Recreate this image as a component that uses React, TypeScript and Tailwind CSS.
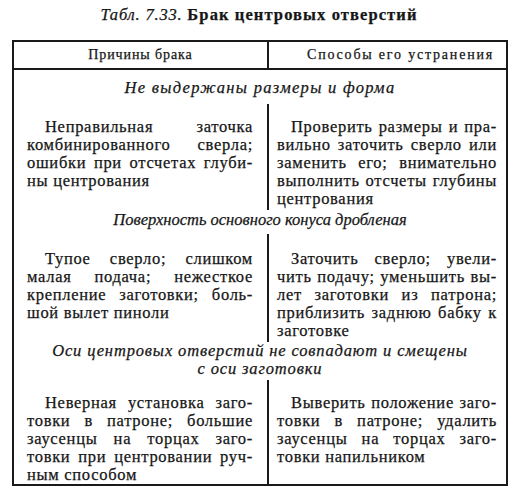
const serif = "[font-family:'Liberation_Serif','Times_New_Roman',serif]";

type Line = { t: string; j?: boolean };

function Para({ lines, indent }: { lines: Line[]; indent: string }) {
  return (
    <div>
      {lines.map((l, i) => (
        <div
          key={i}
          className={`${l.j ? "text-justify [text-align-last:justify]" : "whitespace-nowrap"} ${i === 0 ? indent : ""}`}
        >
          {l.t}
        </div>
      ))}
    </div>
  );
}

const sections: {
  title: string[];
  left: Line[];
  right: Line[];
}[] = [
  {
    title: ["Не выдержаны размеры и форма"],
    left: [
      { t: "Неправильная заточка", j: true },
      { t: "комбинированного сверла;", j: true },
      { t: "ошибки при отсчетах глуби-", j: true },
      { t: "ны центрования" },
    ],
    right: [
      { t: "Проверить размеры и пра-", j: true },
      { t: "вильно заточить сверло или", j: true },
      { t: "заменить его; внимательно", j: true },
      { t: "выполнить отсчеты глубины", j: true },
      { t: "центрования" },
    ],
  },
  {
    title: ["Поверхность основного конуса дробленая"],
    left: [
      { t: "Тупое сверло; слишком", j: true },
      { t: "малая подача; нежесткое", j: true },
      { t: "крепление заготовки; боль-", j: true },
      { t: "шой вылет пиноли" },
    ],
    right: [
      { t: "Заточить сверло; увели-", j: true },
      { t: "чить подачу; уменьшить вы-", j: true },
      { t: "лет заготовки из патрона;", j: true },
      { t: "приблизить заднюю бабку к", j: true },
      { t: "заготовке" },
    ],
  },
  {
    title: ["Оси центровых отверстий не совпадают и смещены", "с оси заготовки"],
    left: [
      { t: "Неверная установка заго-", j: true },
      { t: "товки в патроне; большие", j: true },
      { t: "заусенцы на торцах заго-", j: true },
      { t: "товки при центровании руч-", j: true },
      { t: "ным способом" },
    ],
    right: [
      { t: "Выверить положение заго-", j: true },
      { t: "товки в патроне; удалить", j: true },
      { t: "заусенцы на торцах заго-", j: true },
      { t: "товки напильником" },
    ],
  },
];

const headPad = [
  "pt-[9px] pb-[7px] tracking-[1.3px]",
  "pt-[1px] pb-[5px] tracking-[0px]",
  "pt-[0px] pb-[2px] tracking-[0.85px]",
];
const bodyPad = ["pt-[14px] pb-[2px]", "pt-[16px] pb-[2px]", "pt-[14px] pb-[0px]"];

export default function App() {
  return (
    <div className={`w-[518px] h-[491px] bg-white text-[#161616] ${serif} overflow-hidden [-webkit-text-stroke:0.25px_#161616]`}>
      {/* Title */}
      <div className="h-[40px] pt-[5px] text-center text-[16.5px] leading-[20px]">
        <span className="italic tracking-[0.8px]">Табл. 7.33. </span>
        <span className="font-bold tracking-[1.1px]">Брак центровых отверстий</span>
      </div>

      {/* Table */}
      <div className="ml-[12px] w-[496px] border-2 border-[#1a1a1a]">
        {/* Header */}
        <div className="grid grid-cols-[255px_1fr] border-b-2 border-[#1a1a1a] text-[14px] leading-[26px]">
          <div className="border-r-2 border-[#1a1a1a] text-center tracking-[0.9px]">Причины брака</div>
          <div className="pl-[26px] text-center tracking-[1.8px]">Способы его устранения</div>
        </div>

        {sections.map((s, si) => (
          <div key={si}>
            <div className={`text-center italic text-[16.5px] leading-[18px] ${headPad[si]}`}>
              {s.title.map((t, i) => (
                <div key={i}>{t}</div>
              ))}
            </div>
            <div className="grid grid-cols-[255px_1fr] text-[16.5px] leading-[18px] tracking-[0.7px]">
              <div className={`border-r-2 border-[#1a1a1a] pl-[13px] pr-[14px] ${bodyPad[si]}`}>
                <Para lines={s.left} indent="pl-[18px]" />
              </div>
              <div className={`pl-[8px] pr-[9px] ${bodyPad[si]}`}>
                <Para lines={s.right} indent="pl-[14px]" />
              </div>
            </div>
          </div>
        ))}
      </div>
    </div>
  );
}
